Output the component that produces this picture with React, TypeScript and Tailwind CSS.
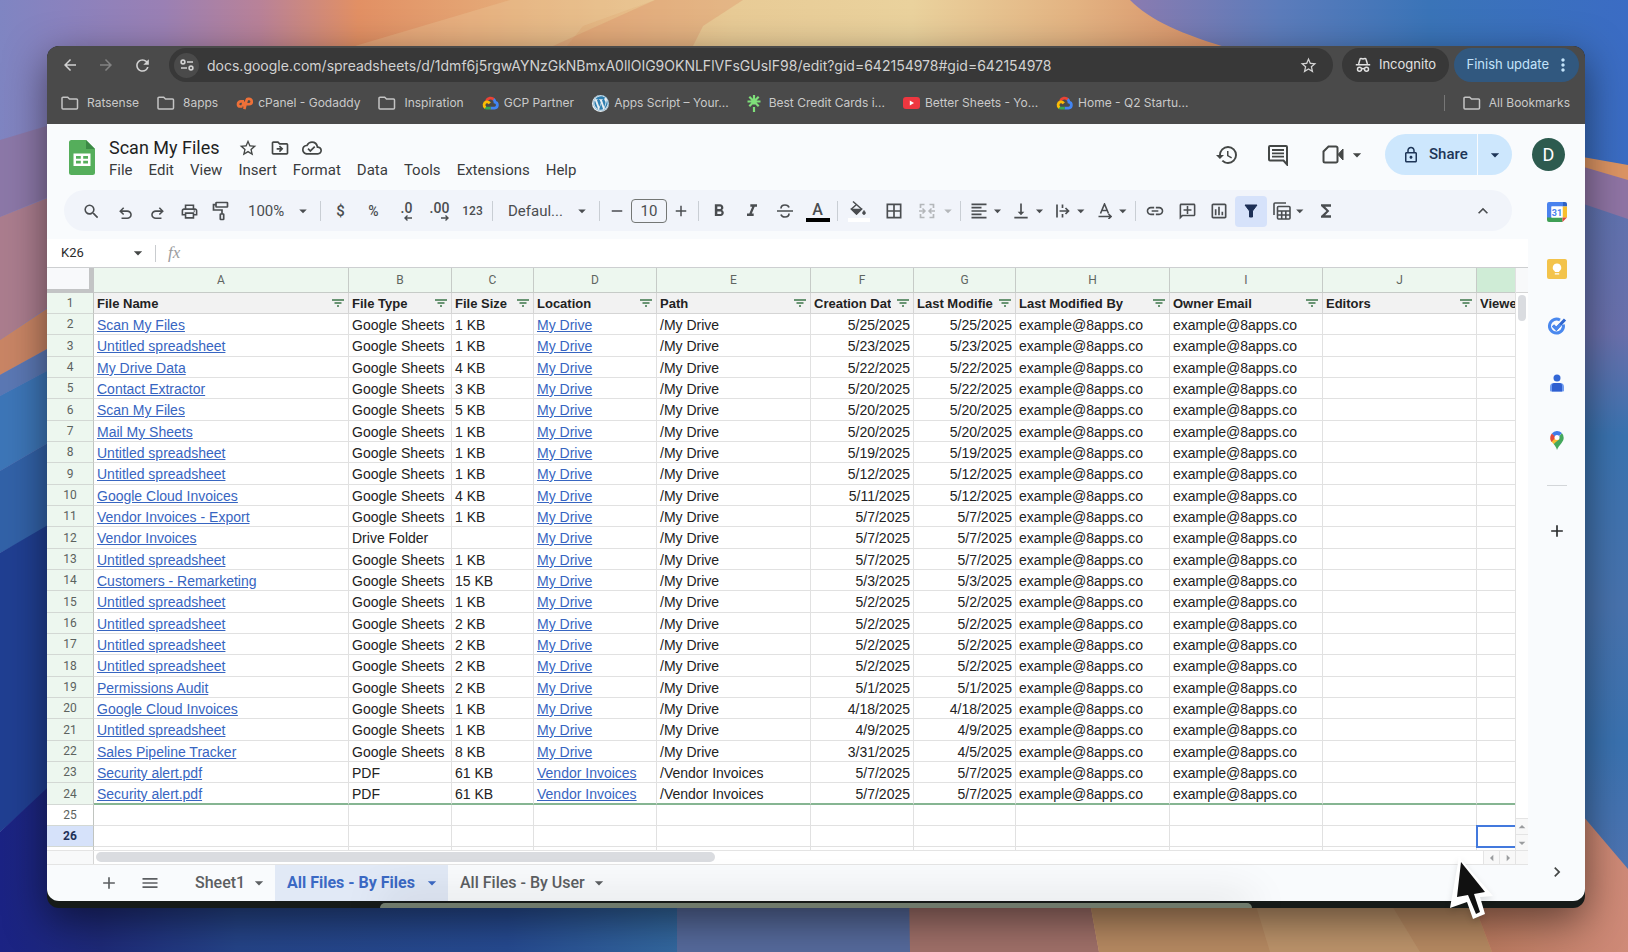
import React from 'react'
import {
  MdAdd,
  MdArrowBack,
  MdArrowDropDown,
  MdArrowForward,
  MdArrowLeft,
  MdArrowRight,
  MdArrowDropUp,
  MdBorderAll,
  MdFormatAlignLeft,
  MdFormatBold,
  MdFormatItalic,
  MdFunctions,
  MdHistory,
  MdKeyboardArrowRight,
  MdKeyboardArrowUp,
  MdLink,
  MdMenu,
  MdMoreVert,
  MdOutlineAddComment,
  MdOutlineCloudDone,
  MdOutlineDriveFileMove,
  MdOutlineInsertChart,
  MdOutlineLock,
  MdOutlinePrint,
  MdRefresh,
  MdRemove,
  MdSearch,
  MdStarBorder,
  MdVerticalAlignBottom,
} from 'react-icons/md'
import { FaWordpress } from 'react-icons/fa'

interface FileRow {
  name: string
  type: string
  size: string
  location: string
  created: string
  modified: string
}

const sheet = (name: string, size: string, created: string, modified = created): FileRow => ({
  name,
  type: 'Google Sheets',
  size,
  location: 'My Drive',
  created,
  modified,
})

const FILES: FileRow[] = [
  sheet('Scan My Files', '1 KB', '5/25/2025'),
  sheet('Untitled spreadsheet', '1 KB', '5/23/2025'),
  sheet('My Drive Data', '4 KB', '5/22/2025'),
  sheet('Contact Extractor', '3 KB', '5/20/2025', '5/22/2025'),
  sheet('Scan My Files', '5 KB', '5/20/2025'),
  sheet('Mail My Sheets', '1 KB', '5/20/2025'),
  sheet('Untitled spreadsheet', '1 KB', '5/19/2025'),
  sheet('Untitled spreadsheet', '1 KB', '5/12/2025'),
  sheet('Google Cloud Invoices', '4 KB', '5/11/2025', '5/12/2025'),
  sheet('Vendor Invoices - Export', '1 KB', '5/7/2025'),
  { ...sheet('Vendor Invoices', '', '5/7/2025'), type: 'Drive Folder' },
  sheet('Untitled spreadsheet', '1 KB', '5/7/2025'),
  sheet('Customers - Remarketing', '15 KB', '5/3/2025'),
  sheet('Untitled spreadsheet', '1 KB', '5/2/2025'),
  sheet('Untitled spreadsheet', '2 KB', '5/2/2025'),
  sheet('Untitled spreadsheet', '2 KB', '5/2/2025'),
  sheet('Untitled spreadsheet', '2 KB', '5/2/2025'),
  sheet('Permissions Audit', '2 KB', '5/1/2025'),
  sheet('Google Cloud Invoices', '1 KB', '4/18/2025'),
  sheet('Untitled spreadsheet', '1 KB', '4/9/2025'),
  sheet('Sales Pipeline Tracker', '8 KB', '3/31/2025', '4/5/2025'),
  { ...sheet('Security alert.pdf', '61 KB', '5/7/2025'), type: 'PDF', location: 'Vendor Invoices' },
  { ...sheet('Security alert.pdf', '61 KB', '5/7/2025'), type: 'PDF', location: 'Vendor Invoices' },
]

const COLUMNS = [
  { letter: 'A', title: 'File Name', col: 'w-[255px]' },
  { letter: 'B', title: 'File Type', col: 'w-[103px]' },
  { letter: 'C', title: 'File Size', col: 'w-[82px]' },
  { letter: 'D', title: 'Location', col: 'w-[123px]' },
  { letter: 'E', title: 'Path', col: 'w-[154px]' },
  { letter: 'F', title: 'Creation Date', col: 'w-[103px]' },
  { letter: 'G', title: 'Last Modified', col: 'w-[102px]' },
  { letter: 'H', title: 'Last Modified By', col: 'w-[154px]' },
  { letter: 'I', title: 'Owner Email', col: 'w-[153px]' },
  { letter: 'J', title: 'Editors', col: 'w-[154px]' },
  { letter: 'K', title: 'Viewers', col: 'w-[154px]' },
]

const MENUS = ['File', 'Edit', 'View', 'Insert', 'Format', 'Data', 'Tools', 'Extensions', 'Help']

/* ---------- icons ---------- */

function Sym({ d, className = 'size-5' }: { d: string; className?: string }) {
  return (
    <svg viewBox="0 -960 960 960" fill="currentColor" className={className}>
      <path d={d} />
    </svg>
  )
}

const UNDO =
  'M280-200v-80h284q63 0 109.5-40T720-420q0-60-46.5-100T564-560H312l104 104-56 56-200-200 200-200 56 56-104 104h252q97 0 166.5 63T800-420q0 94-69.5 157T564-200H280Z'
const REDO =
  'M396-200q-97 0-166.500-63T160-420q0-94 69.500-157T396-640h252L544-744l56-56 200 200-200 200-56-56 104-104H396q-63 0-109.500 40T240-420q0 60 46.500 100T396-280h284v80H396Z'

function FolderIcon() {
  return (
    <svg viewBox="0 0 18 14" className="h-[14px] w-[18px]" fill="none" stroke="#c4c4c4" strokeWidth="1.5">
      <path d="M1 2.2V12a1 1 0 0 0 1 1h13.500a1 1 0 0 0 1-1V4a1 1 0 0 0-1-1H8.500L6.700 1.200H2a1 1 0 0 0-1 1Z" />
    </svg>
  )
}

function CpanelIcon() {
  return (
    <svg viewBox="0 0 18 14" className="h-[13px] w-[17px]" fill="none" stroke="#ee7038" strokeWidth="2.900">
      <path d="M8.500 4.700H5a3 3 0 0 0-3 3c0 1.500 1 2.500 2.500 2.500h2.300" />
      <path d="M8.800 13 11.300 3.300c.2-.8.700-1.300 1.500-1.300h1a2.700 2.700 0 0 1 .2 5.800h-2.600M8.200 4.700 6.800 10.200" />
    </svg>
  )
}

function CloudIcon() {
  return (
    <svg viewBox="0 0 18 15" className="h-[14px] w-[17px]" fill="none" strokeWidth="3">
      <path d="M4.500 5.300a5 5 0 0 1 8.200-1.500" stroke="#ea4335" />
      <path d="M12.400 3.600c.9.900 1.300 1.900 1.400 2.900a3.300 3.300 0 0 1-.4 6.500H9" stroke="#4285f4" />
      <path d="M9.200 13H5a3.300 3.300 0 0 1-2-.7" stroke="#34a853" />
      <path d="M3.600 12.500a3.400 3.400 0 0 1 1-6.100c1.400-.3 2.700.3 3.600 1.500" stroke="#fbbc04" />
    </svg>
  )
}

function LinktreeIcon() {
  return (
    <svg viewBox="0 0 14 17" className="h-[17px] w-[14px]" stroke="#7fe07a" strokeWidth="2.200">
      <path d="M7 0v9.500M7 12v5M.5 6.500h13M2.300 1.800l9.400 9.400M11.700 1.800 2.300 11.200" />
    </svg>
  )
}

function YoutubeIcon() {
  return (
    <svg viewBox="0 0 17 12" className="h-3 w-[17px]">
      <rect width="17" height="12" rx="3" fill="#ee3740" />
      <path d="M6.800 3.500v5L11 6Z" fill="#fff" />
    </svg>
  )
}

function WordpressIcon() {
  return (
    <span className="flex size-[17px] items-center justify-center rounded-full bg-[#e8eef2]">
      <FaWordpress className="size-4 text-[#2f7fb0]" />
    </span>
  )
}

function IncognitoIcon() {
  return (
    <svg viewBox="0 0 16 16" className="size-4" fill="none" stroke="currentColor" strokeWidth="1.500">
      <path d="M3.600 7 5 2.200c.1-.5.600-.8 1.100-.6L8 2l1.900-.4c.5-.2 1 .1 1.100.6L12.400 7M.8 7.700h14.400" />
      <circle cx="4.500" cy="12.300" r="2" />
      <circle cx="11.500" cy="12.300" r="2" />
      <path d="M6.500 12c1-.6 2-.6 3 0" />
    </svg>
  )
}

function SheetsLogo() {
  return (
    <svg viewBox="0 0 26 35" className="h-[35px] w-[26px]">
      <path d="M2.500 0H17l9 9v23.500a2.500 2.500 0 0 1-2.500 2.500h-21A2.500 2.500 0 0 1 0 32.500v-30A2.500 2.500 0 0 1 2.500 0Z" fill="#55ae5b" />
      <path d="M17 0v9h9Z" fill="#3b8a45" />
      <path d="M4.500 13.500h17V26h-17ZM7 16v2.700h4.800V16Zm7.200 0v2.700H19V16ZM7 20.800v2.700h4.800v-2.700Zm7.200 0v2.700H19v-2.700Z" fill="#fff" fillRule="evenodd" />
    </svg>
  )
}

function PaintFormatIcon() {
  return (
    <svg viewBox="0 0 18 20" className="h-5 w-[18px]" fill="none" stroke="currentColor" strokeWidth="1.700">
      <rect x="4" y="1.500" width="11.500" height="4.500" rx=".5" />
      <path d="M4 3.700H1.500V9H10v4" />
      <rect x="8.300" y="13" width="3.400" height="5.500" rx=".5" />
    </svg>
  )
}

function CommentIcon() {
  return (
    <svg viewBox="0 0 22 22" className="size-[22px]" fill="none" stroke="currentColor" strokeWidth="2">
      <path d="M20 20.500V3a1 1 0 0 0-1-1H3a1 1 0 0 0-1 1v12.500a1 1 0 0 0 1 1h13.500Z" />
      <path d="M5 6h12M5 9.300h12M5 12.600h12" strokeWidth="1.800" />
    </svg>
  )
}

function MeetIcon() {
  return (
    <svg viewBox="0 0 22 19" className="h-[19px] w-[22px]" fill="none" stroke="currentColor" strokeWidth="2">
      <path d="M6.500 1.500H14a1.500 1.500 0 0 1 1.500 1.500v13A1.500 1.500 0 0 1 14 17.500H3A1.500 1.500 0 0 1 1.500 16V6.500Z" />
      <path d="M16 9.500 21 4v11Z" fill="currentColor" strokeWidth="1" />
    </svg>
  )
}

function StrikeIcon() {
  return (
    <svg viewBox="0 0 18 16" className="h-4 w-[18px]" fill="none" stroke="currentColor" strokeWidth="1.700">
      <path d="M1 8h16M5 5.500C5 3.300 6.700 2 9 2s3.600 1 4 2.500M13 10.500c0 2.200-1.700 3.500-4 3.500s-3.600-1-4-2.500" />
    </svg>
  )
}

function FillIcon() {
  return (
    <svg viewBox="0 0 24 22" className="h-[22px] w-6" fill="none" stroke="currentColor" strokeWidth="1.500">
      <path d="M6 1.500 14.500 9 9.500 14 4.500 9 9.500 4.500" />
      <path d="M5 9.500h9l-4.500 4.500Z" fill="currentColor" />
      <path d="M17 10.500c1 1.300 1.400 2 1.400 2.600a1.400 1.400 0 0 1-2.800 0c0-.6.400-1.300 1.400-2.600Z" fill="currentColor" strokeWidth=".8" />
      <path d="M1 20h22" stroke="#fff" strokeWidth="4" />
    </svg>
  )
}

function MergeIcon() {
  return (
    <svg viewBox="0 0 16 16" className="size-4" fill="none" stroke="currentColor" strokeWidth="1.700">
      <path d="M5.500 1.500H1.500V5M10.500 1.500h4V5M5.500 14.500H1.500V11M10.500 14.500h4V11" />
      <path d="M0 8h5.500M3.500 5.500 6 8l-2.500 2.500M16 8h-5.500M12.500 5.500 10 8l2.500 2.500" strokeWidth="1.500" />
    </svg>
  )
}

function OverflowIcon() {
  return (
    <svg viewBox="0 0 14 14" className="size-[14px]" fill="none" stroke="currentColor" strokeWidth="1.700">
      <path d="M1 .5v13M6.500.5V4M6.500 10v3.500M3.500 7h9M9.500 4l3 3-3 3" />
    </svg>
  )
}

function RotateIcon() {
  return (
    <svg viewBox="0 0 14 16" className="h-4 w-[14px]" fill="none" stroke="currentColor" strokeWidth="1.600">
      <path d="M2.500 10.500 6.500 1l4 9.500M4 7.500h5M.5 13.500h12M10.500 11l2.500 2.500-2.500 2.500" />
    </svg>
  )
}

function TableViewsIcon() {
  return (
    <svg viewBox="0 0 18 18" className="size-[18px]" fill="none" stroke="currentColor" strokeWidth="1.600">
      <path d="M1 13V2a1 1 0 0 1 1-1h11" />
      <rect x="4.500" y="4.500" width="12.500" height="12.500" rx="1" />
      <path d="M4.500 9H17M4.500 13H17M8.700 9v8M12.800 9v8" />
    </svg>
  )
}

function FunnelIcon() {
  return (
    <svg viewBox="0 0 14 14" className="size-[14px]" fill="currentColor">
      <path d="M1 1h12L8.500 7v6h-3V7Z" stroke="currentColor" strokeWidth="1" strokeLinejoin="round" />
    </svg>
  )
}

function FilterLines() {
  return (
    <svg viewBox="0 0 12 8" className="h-2 w-3 shrink-0" stroke="#3d7549" strokeWidth="1.300">
      <path d="M0 1h12M2.500 4h7M5 7h2" />
    </svg>
  )
}

function CalendarLogo() {
  return (
    <svg viewBox="0 0 20 20" className="size-5">
      <path d="M2 0h14v4.500H4.500V16H0V2a2 2 0 0 1 2-2Z" fill="#4a82ee" />
      <path d="M16 0h2a2 2 0 0 1 2 2v2.500h-4Z" fill="#2f62c4" />
      <path d="M15.500 4.500H20v11h-4.500Z" fill="#f8bf2d" />
      <path d="M0 15.500h15.500V20H2a2 2 0 0 1-2-2Z" fill="#3f9f55" />
      <path d="M15.500 15.500H20L15.500 20Z" fill="#e24a3b" />
      <path d="M4.500 4.500h11v11h-11Z" fill="#fff" />
      <text x="10" y="13.500" textAnchor="middle" fontSize="9" fontWeight="700" fontFamily="Roboto, sans-serif" fill="#4a82ee">
        31
      </text>
    </svg>
  )
}

function KeepLogo() {
  return (
    <svg viewBox="0 0 20 20" className="size-5">
      <rect width="20" height="20" rx="2" fill="#f3c34b" />
      <path d="M10 4.500a4.200 4.200 0 0 0-2.200 7.800V13h4.400v-.7A4.200 4.200 0 0 0 10 4.500ZM7.800 14.200h4.400v1.400H7.800Z" fill="#fff" />
    </svg>
  )
}

function TasksLogo() {
  return (
    <svg viewBox="0 0 20 20" className="size-5" fill="none">
      <path d="M16.300 8.500A7 7 0 1 1 13 4" stroke="#4a88ee" strokeWidth="3" />
      <path d="m6 9.500 3.300 3.300 8.700-9.300" stroke="#2f66d0" strokeWidth="3" />
      <path d="m6 9.500 3.300 3.300 4-4.300" stroke="#4a88ee" strokeWidth="3" />
    </svg>
  )
}

function ContactsLogo() {
  return (
    <svg viewBox="0 0 20 20" className="size-5">
      <circle cx="10" cy="5" r="3.500" fill="#3367d6" />
      <path d="M7 10h6a4 4 0 0 1 4 4v3.500a1 1 0 0 1-1 1H4a1 1 0 0 1-1-1V14a4 4 0 0 1 4-4Z" fill="#6f9bf0" />
      <path d="M7.500 10h5a2.500 2.500 0 0 1 2.500 2.500v6H5v-6A2.500 2.500 0 0 1 7.500 10Z" fill="#2f5fd0" />
    </svg>
  )
}

function MapsLogo() {
  return (
    <svg viewBox="0 0 20 20" className="size-5">
      <path d="M10 20c-.6-2.500-2-4.300-3.400-6L14.800 3a6.700 6.700 0 0 1 1.900 4.700c0 2-.8 3.600-2.300 5.500C12.500 15.500 10.900 17.500 10 20Z" fill="#45a85c" />
      <path d="M6.600 14C4.800 11.800 3.300 10.100 3.300 7.700L10 6l2.500 3Z" fill="#f7bb33" />
      <path d="M3.300 7.700c0-1.700.6-3.100 1.600-4.300L9 7l-4.500 5A7 7 0 0 1 3.300 7.700Z" fill="#e24a3b" />
      <path d="M4.900 3.400A6.700 6.700 0 0 1 14.800 3L10 8.500Z" fill="#3f7be8" />
      <circle cx="10" cy="7.500" r="2.500" fill="#fff" />
    </svg>
  )
}

/* ---------- browser chrome ---------- */

const BOOKMARKS = [
  { label: 'Ratsense', icon: <FolderIcon />, gap: 'gap-2' },
  { label: '8apps', icon: <FolderIcon />, gap: 'gap-2' },
  { label: 'cPanel - Godaddy', icon: <CpanelIcon />, gap: 'gap-[5px]' },
  { label: 'Inspiration', icon: <FolderIcon />, gap: 'gap-2' },
  { label: 'GCP Partner', icon: <CloudIcon />, gap: 'gap-[5px]' },
  { label: 'Apps Script – Your...', icon: <WordpressIcon />, gap: 'gap-[5px]' },
  { label: 'Best Credit Cards i...', icon: <LinktreeIcon />, gap: 'gap-2' },
  { label: 'Better Sheets - Yo...', icon: <YoutubeIcon />, gap: 'gap-[5px]' },
  { label: 'Home - Q2 Startu...', icon: <CloudIcon />, gap: 'gap-[5px]' },
]

function BrowserBar() {
  return (
    <header className="bg-[#4a4a4a] pt-[2px] font-[Inter,sans-serif] text-[#d2d2d2]">
      <div className="flex items-center pr-[6px] pl-[5px]">
        <button type="button" aria-label="Back" className="flex w-9 justify-center">
          <MdArrowBack className="size-[18px]" />
        </button>
        <button type="button" aria-label="Forward" className="flex w-9 justify-center text-[#838383]">
          <MdArrowForward className="size-[18px]" />
        </button>
        <button type="button" aria-label="Reload" className="flex w-9 justify-center">
          <MdRefresh className="size-[19px]" />
        </button>
        <div className="ml-[9px] flex h-[34px] min-w-0 flex-1 items-center rounded-full bg-[#383838] pr-[15px] pl-[5px]">
          <button type="button" aria-label="Site information" className="flex size-[25px] shrink-0 items-center justify-center rounded-full bg-[#4a4a4a]">
            <svg viewBox="0 0 14 12" className="h-3 w-[14px]" fill="none" stroke="currentColor" strokeWidth="1.600">
              <circle cx="3" cy="3" r="1.900" />
              <circle cx="11" cy="9" r="1.900" />
              <path d="M7 3h6M1 9h6" />
            </svg>
          </button>
          <input
            aria-label="Address"
            className="ml-2 min-w-0 flex-1 bg-transparent font-[Inter,sans-serif] text-[14px] outline-none"
            defaultValue="docs.google.com/spreadsheets/d/1dmf6j5rgwAYNzGkNBmxA0llOIG9OKNLFlVFsGUsIF98/edit?gid=642154978#gid=642154978"
          />
          <button type="button" aria-label="Bookmark this tab">
            <MdStarBorder className="size-[19px]" />
          </button>
        </div>
        <div className="ml-[9px] flex h-[34px] w-[107px] items-center justify-center gap-2 rounded-full bg-[#383838] text-[13px] text-[#e2e2e2]">
          <IncognitoIcon />
          Incognito
        </div>
        <button type="button" className="ml-[5px] flex h-[34px] w-[125px] items-center justify-end gap-1 rounded-full bg-[#31587f] pr-[6px] text-[13px] text-[#c4e4fb]">
          Finish update
          <MdMoreVert className="size-5" />
        </button>
      </div>
      <nav className="flex h-[42px] items-center gap-[18px] pr-[15px] pl-[14px] text-[12px] whitespace-nowrap text-[#c9c9c9]">
        {BOOKMARKS.map(({ label, icon, gap }) => (
          <a key={label} href="#" className={`flex items-center ${gap}`}>
            {icon}
            {label}
          </a>
        ))}
        <span className="ml-auto h-4 w-px bg-[#777]" />
        <a href="#" className="flex items-center gap-2">
          <FolderIcon />
          All Bookmarks
        </a>
      </nav>
    </header>
  )
}

/* ---------- sheet header ---------- */

function DocHeader() {
  return (
    <div className="flex h-[66px] items-start pr-5 pl-[22px] text-[#444746]">
      <a href="#" aria-label="Sheets home" className="mt-4">
        <SheetsLogo />
      </a>
      <div className="mt-[11px] ml-[14px]">
        <div className="flex h-[25px] items-center">
          <h1 className="text-[18px] text-[#1f1f1f]">Scan My Files</h1>
          <button type="button" aria-label="Star" className="ml-[18px]">
            <MdStarBorder className="size-5" />
          </button>
          <button type="button" aria-label="Move" className="ml-3">
            <MdOutlineDriveFileMove className="size-5" />
          </button>
          <button type="button" aria-label="Document status" className="ml-3">
            <MdOutlineCloudDone className="size-5" />
          </button>
        </div>
        <nav className="flex h-[21px] items-center gap-4 text-[15px] text-[#3a3c3d]">
          {MENUS.map((m) => (
            <button key={m} type="button">
              {m}
            </button>
          ))}
        </nav>
      </div>
      <div className="mt-[10px] ml-auto flex h-[41px] items-center">
        <button type="button" aria-label="Version history">
          <MdHistory className="size-6" />
        </button>
        <button type="button" aria-label="Comments" className="ml-7">
          <CommentIcon />
        </button>
        <button type="button" aria-label="Join a call" className="ml-[33px] flex items-center gap-[3px]">
          <MeetIcon />
          <MdArrowDropDown className="size-5" />
        </button>
        <div className="ml-[18px] flex h-full gap-px">
          <button type="button" className="flex w-[92px] items-center gap-[9px] rounded-l-full bg-[#cde7fd] pl-[17px] text-[15px] font-medium text-[#1d3557]">
            <MdOutlineLock className="size-[18px]" />
            Share
          </button>
          <button type="button" aria-label="Share options" className="flex w-[34px] items-center justify-center rounded-r-full bg-[#cde7fd] text-[#1d3557]">
            <MdArrowDropDown className="size-5" />
          </button>
        </div>
        <button type="button" aria-label="Account" className="ml-5 flex size-[33px] items-center justify-center rounded-full bg-[#2d5b4f] text-[18px] text-white">
          D
        </button>
      </div>
    </div>
  )
}

const Sep = () => <span className="mx-[3px] h-5 w-px shrink-0 bg-[#c9ced4]" />

interface ToolProps {
  label: string
  className?: string
  children: React.ReactNode
}

function Tool({ label, className = 'w-[33px]', children }: ToolProps) {
  return (
    <button type="button" aria-label={label} className={`flex h-[31px] shrink-0 items-center justify-center ${className}`}>
      {children}
    </button>
  )
}

function ToolMenu({ label, children }: ToolProps) {
  return (
    <button type="button" aria-label={label} className="flex h-[31px] w-[42px] shrink-0 items-center pl-[5px]">
      <span className="flex w-5 justify-center">{children}</span>
      <MdArrowDropDown className="size-[18px]" />
    </button>
  )
}

function Decimals({ text, right = false }: { text: string; right?: boolean }) {
  return (
    <span className="flex flex-col items-end text-[14px] leading-[14px] font-medium">
      {text}
      <svg viewBox="0 0 8 6" className="h-[6px] w-2" fill="none" stroke="currentColor" strokeWidth="1.400">
        {right ? <path d="M0 3h7M4.500.5 7 3 4.500 5.500" /> : <path d="M8 3H1M3.500.5 1 3l2.500 2.500" />}
      </svg>
    </span>
  )
}

function Toolbar() {
  return (
    <div role="toolbar" className="mr-4 ml-[17px] flex h-[41px] items-center rounded-full bg-[#f1f4fa] px-[9px] pt-px text-[#4a4d50]">
      <Tool label="Search the menus" className="w-9">
        <MdSearch className="size-[19px]" />
      </Tool>
      <Tool label="Undo" className="w-8">
        <Sym d={UNDO} className="mt-1 size-[19px]" />
      </Tool>
      <Tool label="Redo" className="w-8">
        <Sym d={REDO} className="mt-1 size-[19px]" />
      </Tool>
      <Tool label="Print" className="w-8">
        <MdOutlinePrint className="size-[19px]" />
      </Tool>
      <Tool label="Paint format" className="w-8">
        <PaintFormatIcon />
      </Tool>
      <label className="relative ml-1 flex w-[76px] shrink-0 items-center">
        <select aria-label="Zoom" className="w-full appearance-none bg-transparent pl-[7px] text-[15px] outline-none">
          <option>100%</option>
        </select>
        <MdArrowDropDown className="pointer-events-none absolute right-[5px] size-[18px]" />
      </label>
      <Sep />
      <Tool label="Format as currency">
        <span className="text-[15px] font-medium">$</span>
      </Tool>
      <Tool label="Format as percent">
        <span className="text-[14px] font-medium">%</span>
      </Tool>
      <Tool label="Decrease decimal places">
        <Decimals text=".0" />
      </Tool>
      <Tool label="Increase decimal places">
        <Decimals text=".00" right />
      </Tool>
      <Tool label="More formats">
        <span className="text-[12px] font-medium">123</span>
      </Tool>
      <Sep />
      <label className="relative flex w-[100px] shrink-0 items-center">
        <select aria-label="Font" className="w-full appearance-none bg-transparent pl-3 text-[15px] outline-none">
          <option>Defaul...</option>
        </select>
        <MdArrowDropDown className="pointer-events-none absolute right-[5px] size-[18px]" />
      </label>
      <Sep />
      <Tool label="Decrease font size" className="w-7">
        <MdRemove className="size-[18px]" />
      </Tool>
      <input
        aria-label="Font size"
        defaultValue="10"
        className="h-6 w-9 shrink-0 rounded-[4px] border border-[#747775] bg-transparent text-center text-[15px] outline-none"
      />
      <Tool label="Increase font size" className="w-7">
        <MdAdd className="size-[18px]" />
      </Tool>
      <Sep />
      <Tool label="Bold">
        <MdFormatBold className="size-5" />
      </Tool>
      <Tool label="Italic">
        <MdFormatItalic className="size-5" />
      </Tool>
      <Tool label="Strikethrough">
        <StrikeIcon />
      </Tool>
      <Tool label="Text color">
        <span className="flex w-6 flex-col items-center border-b-4 border-black text-[16px] leading-[17px] font-medium">A</span>
      </Tool>
      <Sep />
      <Tool label="Fill color" className="w-9">
        <FillIcon />
      </Tool>
      <Tool label="Borders" className="w-[34px]">
        <MdBorderAll className="size-5" />
      </Tool>
      <Tool label="Merge cells" className="w-[46px] gap-1 pl-2 text-[#b4b7ba]">
        <MergeIcon />
        <MdArrowDropDown className="size-[18px]" />
      </Tool>
      <Sep />
      <ToolMenu label="Horizontal align">
        <MdFormatAlignLeft className="size-5" />
      </ToolMenu>
      <ToolMenu label="Vertical align">
        <MdVerticalAlignBottom className="size-5" />
      </ToolMenu>
      <ToolMenu label="Text wrapping">
        <OverflowIcon />
      </ToolMenu>
      <ToolMenu label="Text rotation">
        <RotateIcon />
      </ToolMenu>
      <Sep />
      <Tool label="Insert link" className="w-8">
        <MdLink className="size-5" />
      </Tool>
      <Tool label="Insert comment" className="w-8">
        <MdOutlineAddComment className="size-[19px] -scale-x-100" />
      </Tool>
      <Tool label="Insert chart" className="w-8">
        <MdOutlineInsertChart className="size-5" />
      </Tool>
      <Tool label="Remove filter" className="w-8 rounded-[4px] bg-[#d6e2fa] text-[#1c2f56]">
        <FunnelIcon />
      </Tool>
      <ToolMenu label="Table views">
        <TableViewsIcon />
      </ToolMenu>
      <Tool label="Functions">
        <MdFunctions className="size-5" />
      </Tool>
      <button type="button" aria-label="Hide the menus" className="mr-[10px] ml-auto">
        <MdKeyboardArrowUp className="size-5" />
      </button>
    </div>
  )
}

function FormulaBar() {
  return (
    <div className="mt-2 flex h-[29px] items-center border-b border-[#cdcfd1] bg-white pl-[14px] text-[#444746]">
      <input aria-label="Name box" defaultValue="K26" className="w-[67px] bg-transparent text-[13px] text-[#2a2c2d] outline-none" />
      <MdArrowDropDown className="size-5" />
      <span className="ml-[7px] h-[17px] w-px bg-[#c9cccf]" />
      <label htmlFor="formula" className="ml-3 font-['Liberation_Serif',serif] text-[17px] text-[#9a9c9e] italic">
        fx
      </label>
      <input id="formula" className="ml-3 min-w-0 flex-1 bg-transparent text-[13px] outline-none" />
    </div>
  )
}

/* ---------- grid ---------- */

const CELL = 'overflow-hidden border-r border-b border-[#e1e1e1] bg-white px-[3px] pt-[2px] whitespace-nowrap'
const ROW_HEAD = 'border-r border-b border-r-[#c0c4c0] border-b-[#d3d8d4] p-0 text-center font-[Roboto,sans-serif] text-[12px] leading-[14px]'
const ROW_HEAD_PLAIN = 'font-normal text-[#5c625e]'

function Row({ file, n }: { file: FileRow; n: number }) {
  const cell = n === 24 ? `${CELL} border-b-2 border-b-[#86b592]` : CELL
  const path = `/${file.location}`
  return (
    <tr className="h-[21px] nth-[3n]:h-[22px]">
      <th scope="row" className={`${ROW_HEAD} ${ROW_HEAD_PLAIN} bg-[#edf7ef]`}>{n}</th>
      <td className={cell}>
        <a href="#" className="text-[#3765c1] underline">{file.name}</a>
      </td>
      <td className={cell}>{file.type}</td>
      <td className={cell}>{file.size}</td>
      <td className={cell}>
        <a href="#" className="text-[#3765c1] underline">{file.location}</a>
      </td>
      <td className={cell}>{path}</td>
      <td className={`${cell} text-right`}>{file.created}</td>
      <td className={`${cell} text-right`}>{file.modified}</td>
      <td className={cell}>example@8apps.co</td>
      <td className={cell}>example@8apps.co</td>
      <td className={cell} />
      <td className={cell} />
    </tr>
  )
}

function Grid() {
  return (
    <div className="min-w-0 flex-1 overflow-hidden">
      <table className="w-[1584px] table-fixed border-separate border-spacing-0 font-['Liberation_Sans',Arial,sans-serif] text-[14px] leading-[17px] text-[#222]">
        <colgroup>
          <col className="w-[47px]" />
          {COLUMNS.map((c) => (
            <col key={c.letter} className={c.col} />
          ))}
        </colgroup>
        <thead>
          <tr className="h-[25px]">
            <td className="border-r-5 border-b-4 border-[#c3c4c5] bg-[#f8f9fb] p-0" />
            {COLUMNS.map((c) => (
              <th
                key={c.letter}
                scope="col"
                className={`border-r border-b border-[#c6cbc7] p-0 font-[Roboto,sans-serif] text-[12px] font-normal text-[#5f6561] ${
                  c.letter === 'K' ? 'bg-[#cfecd6]' : 'bg-[#edf7ef]'
                }`}
              >
                {c.letter}
              </th>
            ))}
          </tr>
        </thead>
        <tbody>
          <tr className="h-[21px]">
            <th scope="row" className={`${ROW_HEAD} ${ROW_HEAD_PLAIN} bg-[#edf7ef]`}>1</th>
            {COLUMNS.map((c) => (
              <th key={c.letter} className="border-r border-b border-[#d5d5d5] bg-[#f2f2f2] p-0 pr-1 pl-[3px] text-left text-[13px]">
                <span className="flex items-center gap-[6px]">
                  <span className="min-w-0 flex-1 overflow-hidden whitespace-nowrap">{c.title}</span>
                  <FilterLines />
                </span>
              </th>
            ))}
          </tr>
          {FILES.map((file, i) => (
            <Row key={i} file={file} n={i + 2} />
          ))}
          <tr className="h-[21px]">
            <th scope="row" className={`${ROW_HEAD} ${ROW_HEAD_PLAIN} bg-white`}>25</th>
            {COLUMNS.map((c) => (
              <td key={c.letter} className={CELL} />
            ))}
          </tr>
          <tr className="h-[21px]">
            <th scope="row" className={`${ROW_HEAD} bg-[#d6e2fa] font-bold text-[#1f3158]`}>26</th>
            {COLUMNS.map((c) => (
              <td key={c.letter} className={c.letter === 'K' ? `${CELL} relative outline-2 -outline-offset-1 outline-[#4379dd]` : CELL} />
            ))}
          </tr>
          <tr className="h-[3px]">
            <td className="border-r border-[#c0c4c0] bg-white p-0" />
            {COLUMNS.map((c) => (
              <td key={c.letter} className="border-r border-[#e1e1e1] bg-white p-0" />
            ))}
          </tr>
        </tbody>
      </table>
    </div>
  )
}

function VerticalScroll() {
  return (
    <div className="flex w-[13px] shrink-0 flex-col border-l border-[#e1e1e1] bg-white text-[#9a9c9e]">
      <div className="h-[25px] border-b border-[#d5d5d5] bg-[#f8f9fa]" />
      <div className="mx-[2px] mt-[2px] h-[26px] rounded-full bg-[#dadce0]" />
      <button type="button" aria-label="Scroll up" className="mt-auto flex h-4 items-center justify-center border-t border-[#e4e4e4] bg-[#f8f8f8]">
        <MdArrowDropUp className="size-4 shrink-0" />
      </button>
      <button type="button" aria-label="Scroll down" className="flex h-4 items-center justify-center border-t border-[#e4e4e4] bg-[#f8f8f8]">
        <MdArrowDropDown className="size-4 shrink-0" />
      </button>
    </div>
  )
}

function HorizontalScroll() {
  return (
    <div className="flex h-[15px] items-stretch border-t border-b border-[#e4e4e4] bg-white text-[#9a9c9e]">
      <div className="w-[47px] border-r border-[#d5d5d5] bg-[#f8f9fa]" />
      <div className="flex min-w-0 flex-1 items-start pt-px pl-[2px]">
        <div className="h-[10px] w-[619px] rounded-full bg-[#dadce0]" />
      </div>
      <button type="button" aria-label="Scroll left" className="flex w-4 items-center justify-center border-l border-[#e4e4e4] bg-[#f8f8f8]">
        <MdArrowLeft className="size-4 shrink-0" />
      </button>
      <button type="button" aria-label="Scroll right" className="flex w-4 items-center justify-center border-l border-[#e4e4e4] bg-[#f8f8f8]">
        <MdArrowRight className="size-4 shrink-0" />
      </button>
      <div className="w-[13px] border-l border-[#e4e4e4] bg-[#f8f8f8]" />
    </div>
  )
}

function SheetTabs() {
  return (
    <div className="flex h-9 items-stretch text-[16px] font-medium text-[#5c5f62]">
      <button type="button" aria-label="Add sheet" className="ml-[52px] flex items-center">
        <MdAdd className="size-5" />
      </button>
      <button type="button" aria-label="All sheets" className="ml-[21px] flex items-center">
        <MdMenu className="size-5" />
      </button>
      <button type="button" className="ml-[23px] flex w-[92px] items-center justify-between pr-[6px] pl-3">
        Sheet1
        <MdArrowDropDown className="size-5" />
      </button>
      <button type="button" className="flex w-[173px] items-center justify-between bg-[#e1e9f6] pr-[6px] pl-3 font-bold text-[#3b69c4]">
        All Files - By Files
        <MdArrowDropDown className="size-5" />
      </button>
      <button type="button" className="flex w-[163px] items-center justify-between pr-[2px] pl-3">
        All Files - By User
        <MdArrowDropDown className="size-5" />
      </button>
    </div>
  )
}

function SidePanel() {
  return (
    <aside className="flex w-[57px] shrink-0 flex-col items-center pt-3 pb-[19px] text-[#444746]">
      <div className="flex flex-col gap-[37px]">
        <button type="button" aria-label="Calendar"><CalendarLogo /></button>
        <button type="button" aria-label="Keep"><KeepLogo /></button>
        <button type="button" aria-label="Tasks"><TasksLogo /></button>
        <button type="button" aria-label="Contacts"><ContactsLogo /></button>
        <button type="button" aria-label="Maps"><MapsLogo /></button>
      </div>
      <span className="mt-[35px] h-px w-5 bg-[#d3d6d9]" />
      <button type="button" aria-label="Get add-ons" className="mt-[35px]">
        <MdAdd className="size-5 text-[#2b2d2e]" />
      </button>
      <button type="button" aria-label="Hide side panel" className="mt-auto">
        <MdKeyboardArrowRight className="size-5" />
      </button>
    </aside>
  )
}

/* ---------- desktop ---------- */

function Wallpaper() {
  return (
    <svg viewBox="0 0 1628 952" preserveAspectRatio="none" className="absolute inset-0 h-full w-full">
      <defs>
        <linearGradient id="top">
          <stop offset="0" stopColor="#7f85c2" />
          <stop offset=".04" stopColor="#8a82be" />
          <stop offset=".1" stopColor="#9a80b4" />
          <stop offset=".16" stopColor="#b98298" />
          <stop offset=".22" stopColor="#e29064" />
          <stop offset=".32" stopColor="#e5ad7a" />
          <stop offset=".45" stopColor="#e8cb96" />
          <stop offset=".56" stopColor="#ead29d" />
          <stop offset=".66" stopColor="#e3b382" />
          <stop offset=".74" stopColor="#d9946a" />
        </linearGradient>
        <linearGradient id="sky" x1="0" x2="1" y1="0" y2="0">
          <stop offset="0" stopColor="#8a7bb0" />
          <stop offset=".3" stopColor="#5c7cbb" />
          <stop offset=".6" stopColor="#3a74b8" />
          <stop offset="1" stopColor="#3b6cc4" />
        </linearGradient>
        <linearGradient id="right" x1="0" x2="0" y1="0" y2="1">
          <stop offset="0" stopColor="#5f73b0" />
          <stop offset=".2" stopColor="#6a70ac" />
          <stop offset=".35" stopColor="#3a73b0" />
          <stop offset=".6" stopColor="#4873ae" />
          <stop offset=".8" stopColor="#3a72b0" />
          <stop offset="1" stopColor="#4f74b2" />
        </linearGradient>
        <linearGradient id="navy" x1="0" x2="1" y1="0" y2="0">
          <stop offset="0" stopColor="#1b2384" />
          <stop offset=".15" stopColor="#1e2a78" />
          <stop offset=".35" stopColor="#254488" />
          <stop offset=".75" stopColor="#264a90" />
          <stop offset="1" stopColor="#33689f" />
        </linearGradient>
        <linearGradient id="rose" x1="0" x2="1" y1="0" y2="0">
          <stop offset="0" stopColor="#b8785c" />
          <stop offset="1" stopColor="#cf8a78" />
        </linearGradient>
      </defs>
      <rect width="1628" height="952" fill="url(#top)" />
      <path d="M510 0 355 46v40h180l48-60 72-26Z" fill="#f0d8a8" opacity=".25" />
      <path d="M655 0 553 46v40h120l30-60 40-26Z" fill="#dd8f66" opacity=".35" />
      <path d="M1130 0c20 20 50 34 105 50l325 110 68 12V0Z" fill="url(#sky)" />
      <path d="m1560 153 68 12v18l-68-20Z" fill="#dc9463" />
      <path d="m1560 160 68 20v42l-68-24Z" fill="#8f74a4" />
      <path d="m1560 196 68 23v660l-68-90Z" fill="url(#right)" />
      <path d="m0 140 60-18v70L0 217Z" fill="#8c78a8" />
      <path d="m0 217 60-24v106L0 340Z" fill="#ab7d8e" />
      <path d="m0 340 60-40v42L0 375Z" fill="#c98565" />
      <path d="m0 375 60-33v22L0 396Z" fill="#5b78b4" />
      <path d="m0 396 60-32v72L0 471Z" fill="#3d76b8" />
      <path d="m0 471 60-35v84L0 553Z" fill="#3262a8" />
      <path d="m0 553 60-35v260L0 832Z" fill="#203f92" />
      <path d="M0 832 60 776v110h617v66H0Z" fill="url(#navy)" />
      <path d="M677 886h233v66H677Z" fill="#566a9c" />
      <path d="M909 886h178l12 66H910Z" fill="#a07069" />
      <path d="M1087 886h380l25 66h-393Z" fill="#b78a62" />
      <path d="m1250 886 130 0 40 66h-150Z" fill="#c29b72" opacity=".6" />
      <path d="m1467 886 93-97 68 80v83h-136Z" fill="url(#rose)" />
    </svg>
  )
}

function Pointer() {
  return (
    <svg viewBox="0 0 50 70" className="pointer-events-none absolute top-[852px] left-[1446px] h-[70px] w-[50px] drop-shadow-md">
      <path d="M13 5 47 44 34 45 39 62 27 67 21 50 4 56Z" fill="#fff" />
      <path d="M15 10 39 40 28 42 34 60 30 62 22 43 11 45Z" fill="#111" />
    </svg>
  )
}

export default function App() {
  return (
    <div className="relative min-h-screen overflow-hidden bg-[#1e2a78] pt-[46px] pr-[43px] pb-[44px] pl-[47px] font-[Roboto,sans-serif]">
      <Wallpaper />
      <main className="relative overflow-hidden rounded-[12px] bg-[#161b19] pb-[7px] shadow-[0_12px_40px_rgba(0,0,0,0.5)]">
        <BrowserBar />
        <div className="rounded-b-[12px] bg-[#f9fbfd]">
          <DocHeader />
          <div className="flex">
            <div className="min-w-0 flex-1">
              <Toolbar />
              <FormulaBar />
              <div className="flex">
                <Grid />
                <VerticalScroll />
              </div>
              <HorizontalScroll />
              <SheetTabs />
            </div>
            <SidePanel />
          </div>
        </div>
        <div className="pointer-events-none absolute inset-x-[333px] bottom-0 h-[5px] rounded-t-[12px] bg-[#6f7a6b] shadow-[0_0_40px_rgba(0,0,0,0.45)]" />
      </main>
      <Pointer />
    </div>
  )
}
